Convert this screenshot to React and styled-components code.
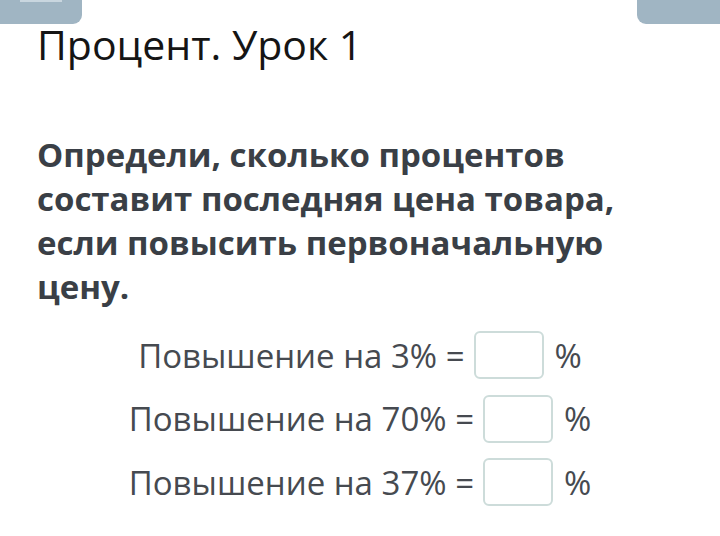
import React from 'react';
import styled, { createGlobalStyle } from 'styled-components';

const GlobalStyle = createGlobalStyle`
  html, body {
    margin: 0;
    padding: 0;
    background: #ffffff;
  }
  body {
    font-family: 'Open Sans', 'Noto Sans', sans-serif;
    width: 720px;
    height: 536px;
    overflow: hidden;
  }
`;

const Page = styled.div`
  width: 720px;
  height: 536px;
  background: #ffffff;
`;

const TopBar = styled.div`
  display: flex;
  justify-content: space-between;
  height: 24px;
`;

const NavButton = styled.div`
  width: ${({ $w }) => $w}px;
  height: 24px;
  background: #a0b5c3;
  border-radius: ${({ $side }) => ($side === 'left' ? '0 0 9px 0' : '0 0 0 9px')};
  display: flex;
  justify-content: center;
`;

const Stripe = styled.span`
  display: block;
  width: 42px;
  height: 2px;
  background: #c9d6df;
`;

const Title = styled.h1`
  margin: 0 0 0 37px;
  font-size: 41px;
  line-height: 40px;
  font-weight: 400;
  color: #151515;
`;

const Question = styled.p`
  margin: 69px 0 0 37px;
  width: 630px;
  font-size: 33px;
  line-height: 44px;
  font-weight: 700;
  color: #3a3f46;
`;

const Rows = styled.div`
  margin-top: 22px;
  display: flex;
  flex-direction: column;
  align-items: center;
  gap: 15.5px;
`;

const Row = styled.div`
  display: flex;
  align-items: center;
  gap: 9px;
  font-size: 33px;
  color: #464a50;
`;

const AnswerBox = styled.input`
  box-sizing: border-box;
  width: 70px;
  height: 48px;
  border: 2px solid #cddcda;
  border-radius: 6px;
  background: #ffffff;
  outline: none;
  font-size: 24px;
  text-align: center;
  margin-right: 2px;
`;

const rows = ['3', '70', '37'];

export default function App() {
  return (
    <Page>
      <GlobalStyle />
      <TopBar>
        <NavButton $w={82} $side="left">
          <Stripe />
        </NavButton>
        <NavButton $w={83} $side="right" />
      </TopBar>
      <Title>Процент. Урок 1</Title>
      <Question>
        Определи, сколько процентов составит последняя цена товара, если повысить
        первоначальную цену.
      </Question>
      <Rows>
        {rows.map((p) => (
          <Row key={p}>
            <span>Повышение на {p}% =</span>
            <AnswerBox />
            <span>%</span>
          </Row>
        ))}
      </Rows>
    </Page>
  );
}
